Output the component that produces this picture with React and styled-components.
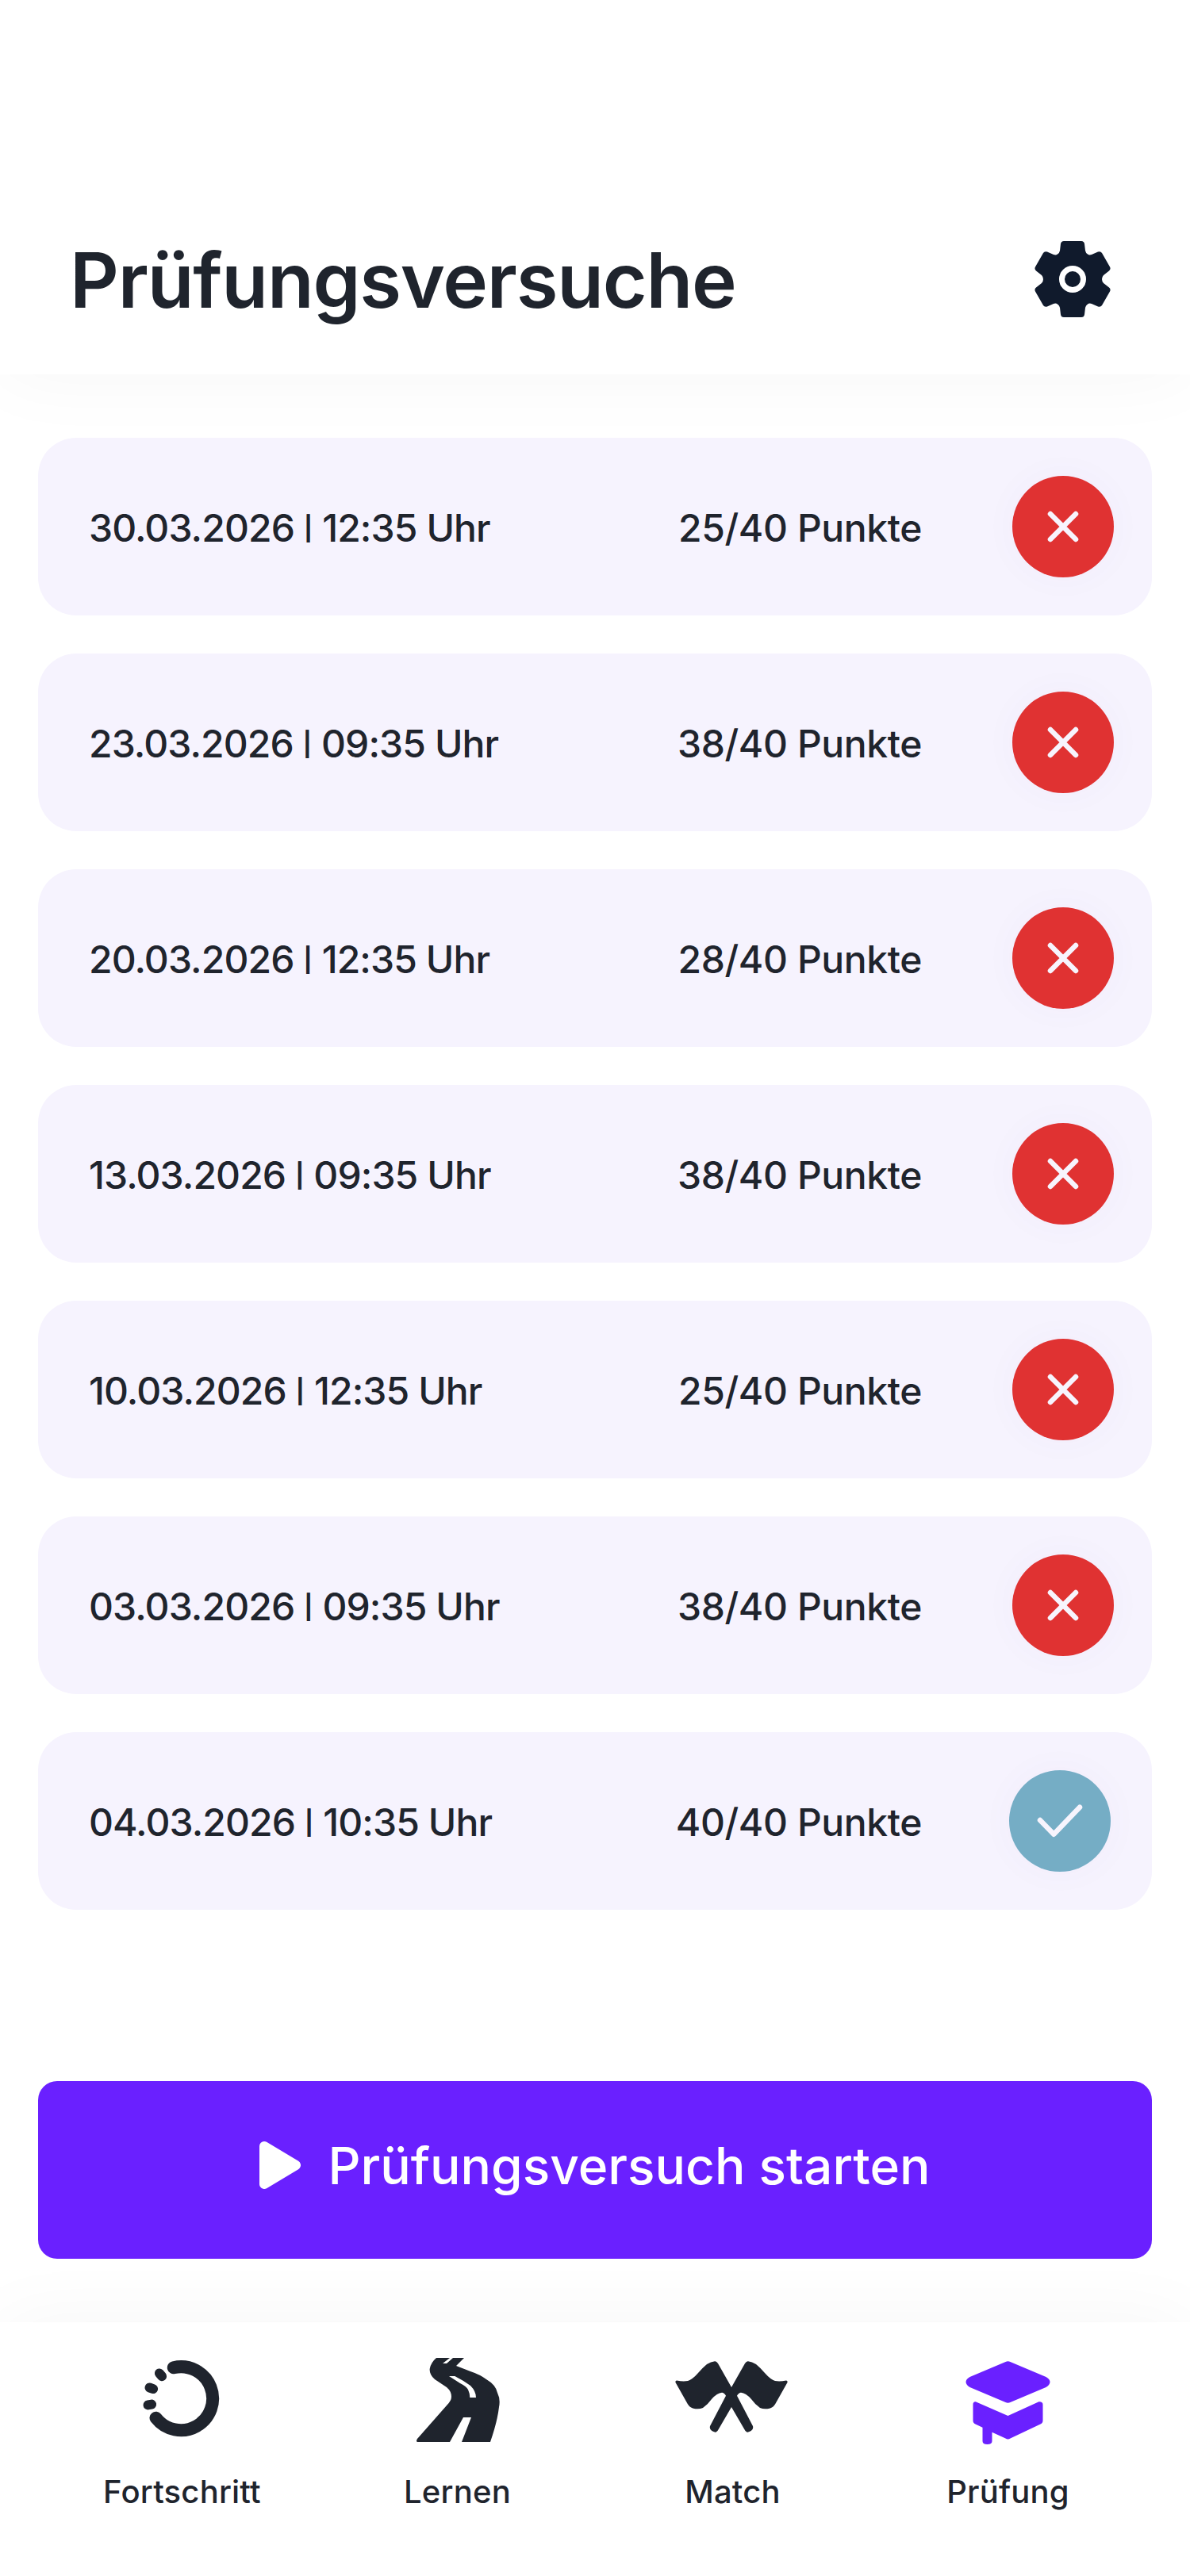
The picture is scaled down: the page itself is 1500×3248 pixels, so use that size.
import React from 'react';
import styled, { createGlobalStyle } from 'styled-components';

const GlobalStyle = createGlobalStyle`
  html, body {
    margin: 0;
    padding: 0;
    background: #fff;
  }
  * {
    box-sizing: border-box;
  }
`;

const Page = styled.div`
  display: flex;
  flex-direction: column;
  width: 1500px;
  height: 3248px;
  overflow: hidden;
  background: #fff;
  font-family: Inter, 'Noto Sans', sans-serif;
  color: #1f242d;
`;

const Header = styled.header`
  position: relative;
  display: flex;
  align-items: flex-end;
  justify-content: space-between;
  height: 472px;
  padding: 0 100px 72px 88px;
  background: #fff;
  box-shadow: 0 0 96px rgba(0, 0, 0, 0.04);
`;

const Title = styled.h1`
  margin: 0 0 -1px;
  font-size: 96px;
  line-height: 96px;
  font-weight: 600;
  letter-spacing: -1.2px;
`;

const GearIcon = styled.svg`
  display: block;
  width: 96px;
  height: 96px;
`;

const Main = styled.main`
  flex: 1;
  display: flex;
  flex-direction: column;
  padding: 80px 48px;
`;

const List = styled.ul`
  display: flex;
  flex-direction: column;
  gap: 48px;
  margin: 0 0 auto;
  padding: 0;
  list-style: none;
`;

const Row = styled.li`
  display: flex;
  align-items: center;
  height: 224px;
  padding: 0 ${(props) => (props.$passed ? 52 : 48)}px 0 64px;
  border-radius: 48px;
  background: #f6f3fe;
`;

const RowDate = styled.span`
  flex: 1;
  display: flex;
  align-items: center;
  padding-top: 4px;
  font-size: 48px;
  line-height: 58px;
  font-weight: 500;
  letter-spacing: -0.9px;
`;

const Separator = styled.span`
  margin: 0 12px;
  font-size: 30px;
  font-weight: 700;
  letter-spacing: 0;
`;

const RowScore = styled.span`
  padding-top: 4px;
  font-size: 48px;
  line-height: 58px;
  font-weight: 500;
  letter-spacing: -0.4px;
`;

const Status = styled.span`
  display: block;
  flex: none;
  width: 128px;
  height: 128px;
  margin-left: ${(props) => (props.$passed ? 110 : 114)}px;
  border-radius: 50%;
  background: ${(props) => (props.$passed ? '#75adc5' : '#e03232')};
  box-shadow: 0 0 48px rgba(90, 70, 170, 0.03);
`;

const StatusIcon = styled.svg`
  display: block;
  width: 128px;
  height: 128px;
  fill: none;
  stroke: #f7f4fd;
  stroke-width: 6.5;
  stroke-linecap: round;
  stroke-linejoin: round;
`;

const StartButton = styled.button`
  display: flex;
  align-items: center;
  justify-content: center;
  gap: 34px;
  width: 100%;
  height: 224px;
  padding: 0 0 12px;
  border: 0;
  border-radius: 24px;
  background: #6a20ff;
  color: #fff;
  font-family: inherit;
  font-size: 64px;
  font-weight: 500;
`;

const PlayIcon = styled.svg`
  display: block;
  width: 52px;
  height: 60px;
  fill: #fff;
  stroke: #fff;
  stroke-width: 12;
  stroke-linejoin: round;
`;

const Nav = styled.nav`
  display: grid;
  grid-template-columns: repeat(4, 1fr);
  height: 320px;
  padding: 44px 56px 0;
  background: #fff;
  box-shadow: 0 0 96px rgba(0, 0, 0, 0.04);
`;

const NavItem = styled.a`
  display: flex;
  flex-direction: column;
  align-items: center;
  color: #1f242d;
`;

const NavIcon = styled.svg`
  display: block;
  width: 150px;
  height: 112px;
  fill: ${(props) => (props.$active ? '#6a20ff' : '#1f242d')};
`;

const NavLabel = styled.span`
  margin-top: 34px;
  font-size: 40px;
  line-height: 48px;
  font-weight: 500;
  letter-spacing: 0.2px;
`;

const attempts = [
  { day: '30.03.2026', time: '12:35 Uhr', score: '25/40 Punkte' },
  { day: '23.03.2026', time: '09:35 Uhr', score: '38/40 Punkte' },
  { day: '20.03.2026', time: '12:35 Uhr', score: '28/40 Punkte' },
  { day: '13.03.2026', time: '09:35 Uhr', score: '38/40 Punkte' },
  { day: '10.03.2026', time: '12:35 Uhr', score: '25/40 Punkte' },
  { day: '03.03.2026', time: '09:35 Uhr', score: '38/40 Punkte' },
  { day: '04.03.2026', time: '10:35 Uhr', score: '40/40 Punkte', passed: true },
];

const Gear = () => (
  <GearIcon viewBox="0 0 96 96">
    <path
      fill="#101a2c"
      d="M37 0H59Q62.5 0 63 3.5L64 12Q64.5 15 67 16.5Q69 18 72 17L80 13.5Q83.5 12.5 85 15L95 32.5Q96.5 35.5 94 37.5L87 43Q85 45 85 48Q85 51 87 53L94 58.5Q96.5 60.5 95 63.5L85 81Q83.5 83.5 80 82.5L72 79Q69 78 67 79.5Q64.5 81 64 84L63 92.5Q62.5 96 59 96H37Q33.5 96 33 92.5L32 84Q31.5 81 29 79.5Q27 78 24 79L16 82.5Q12.5 83.5 11 81L1 63.5Q-.5 60.5 2 58.5L9 53Q11 51 11 48Q11 45 9 43L2 37.5Q-.5 35.5 1 32.5L11 15Q12.5 12.5 16 13.5L24 17Q27 18 29 16.5Q31.5 15 32 12L33 3.5Q33.5 0 37 0Z"
    />
    <circle cx="48" cy="48" r="13.5" fill="none" stroke="#fff" strokeWidth="7" />
  </GearIcon>
);

const ProgressIcon = () => (
  <NavIcon viewBox="0 0 150 112">
    <g transform="translate(26.5 5)" fill="none" stroke="#1f242d" strokeLinecap="round">
      <path strokeWidth="16" d="M37.3 8.3A40 40 0 1 1 15 71.7" />
      <path strokeWidth="12" d="M19.4 15.4L22.6 19.2M7 33.5L11.6 35.1M5 55.4L9.6 54.6" />
    </g>
  </NavIcon>
);

const RoadIcon = () => (
  <NavIcon viewBox="0 0 150 112">
    <g transform="translate(23 1)">
      <path
        fillRule="evenodd"
        d="M25 0H42L33 7H38L46 0H60L50 10L68 17Q80 21 88 27Q100 34 102 44Q106 52 104 62Q102 80 93 106H57L69 75H59L42 106H1Q-1 105 1 102L38 60Q44 54 44 49Q44 42 38 37L23 27Q16 21 16.7 13.7Q18 6 25 0ZM41 23L55 32Q63 36 65 40Q67 44 67.3 50H75Q75 42 68 35Q60 29 48.3 23Z"
      />
    </g>
  </NavIcon>
);

const FlagsIcon = () => (
  <NavIcon viewBox="0 0 150 112">
    <g transform="translate(2 5)">
      <path d="M71 33L88 3Q90 0 92 .3Q97 1 102 4Q108 9 113 15Q120 23 126 25Q132 26 140 24.5Q142 24.5 141.5 27L126 54.5Q123 59 119 59.7Q112 61 107 59Q101 55 96 48Q89 40 83 39.7Q80 40 78 43.7L98 82Q99 86 95.7 88Q92 90 90.7 89.7Q88.5 89 87.3 86L71 58L54.7 86Q53.5 89 51.3 89.7Q50 90 46.3 88Q43 86 44 82L64 43.7Q62 40 59 39.7Q53 40 46 48Q41 55 35 59Q30 61 23 59.7Q19 59 16 54.5L.5 27Q0 24.5 2 24.5Q10 26 16 25Q22 23 29 15Q34 9 40 4Q45 1 50 .3Q52 0 54 3Z" />
    </g>
  </NavIcon>
);

const CapIcon = () => (
  <NavIcon viewBox="0 0 150 112" $active>
    <g transform="translate(21.5 5)">
      <path d="M50 1Q53 -.5 56 1L101 20Q106 23 106 26.3Q106 30 101 33L56 52Q53 53.5 50 52L5 33Q0 30 0 26.3Q0 23 5 20Z" />
      <path d="M9 55Q9 51 12.3 51.3L53 69L92 51.3Q97 51 97 55V75Q97 78 94 79.5L56 97.5Q53 99.5 50 97.5L33 89.7V101Q33 105 27 105Q21 105 21 101V83.7L12 79.5Q9 78 9 75Z" />
    </g>
  </NavIcon>
);

const tabs = [
  { label: 'Fortschritt', Icon: ProgressIcon },
  { label: 'Lernen', Icon: RoadIcon },
  { label: 'Match', Icon: FlagsIcon },
  { label: 'Prüfung', Icon: CapIcon },
];

const App = () => {
  return (
    <Page>
      <GlobalStyle />
      <Header>
        <Title>Prüfungsversuche</Title>
        <Gear />
      </Header>
      <Main>
        <List>
          {attempts.map((attempt) => (
            <Row key={attempt.day} $passed={attempt.passed}>
              <RowDate>
                {attempt.day}
                <Separator>|</Separator>
                {attempt.time}
              </RowDate>
              <RowScore>{attempt.score}</RowScore>
              <Status $passed={attempt.passed}>
                <StatusIcon viewBox="0 0 128 128">
                  {attempt.passed ? <path d="M39 63L56.3 80.7L89 46.7" /> : <path d="M48 48L80 80M80 48L48 80" />}
                </StatusIcon>
              </Status>
            </Row>
          ))}
        </List>
        <StartButton>
          <PlayIcon viewBox="0 0 52 60">
            <path d="M6 6L46 30L6 54Z" />
          </PlayIcon>
          Prüfungsversuch starten
        </StartButton>
      </Main>
      <Nav>
        {tabs.map(({ label, Icon }) => (
          <NavItem key={label}>
            <Icon />
            <NavLabel>{label}</NavLabel>
          </NavItem>
        ))}
      </Nav>
    </Page>
  );
};

export default App;
